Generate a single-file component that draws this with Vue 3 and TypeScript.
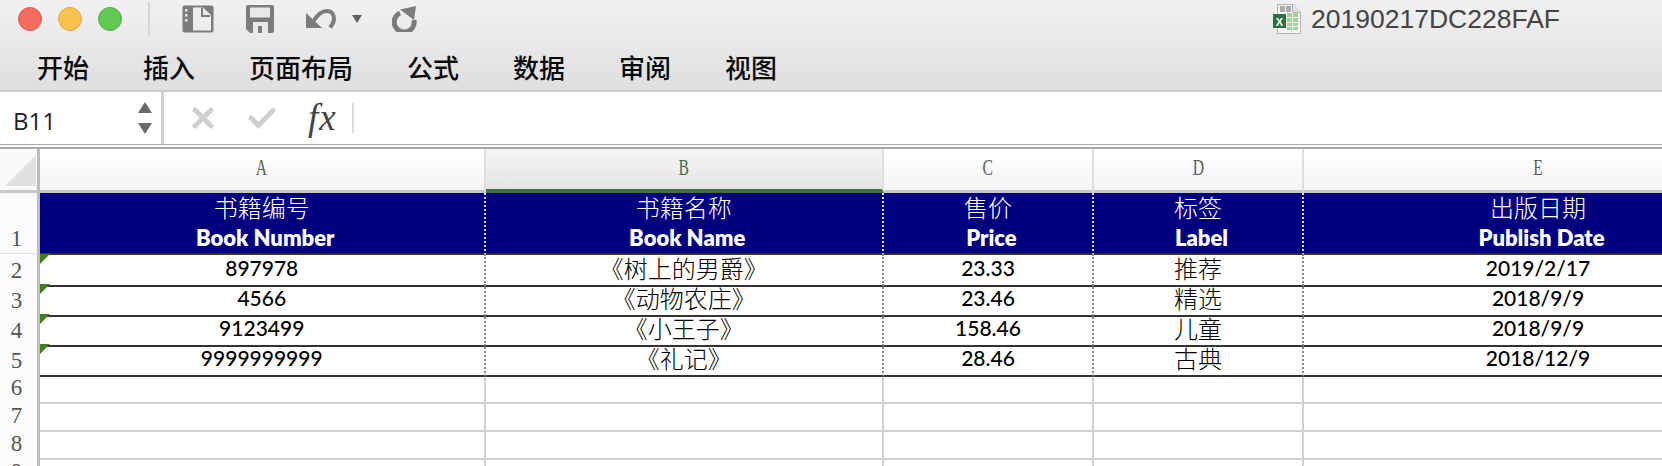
<script setup lang="ts">
interface Row { num: string; price: string; name: string; label: string; date: string; id: string }
const tabs: string[] = ['开始', '插入', '页面布局', '公式', '数据', '审阅', '视图']
const rows: Row[] = [
  { id: '2', num: '897978', name: '《树上的男爵》', price: '23.33', label: '推荐', date: '2019/2/17' },
  { id: '3', num: '4566', name: '《动物农庄》', price: '23.46', label: '精选', date: '2018/9/9' },
  { id: '4', num: '9123499', name: '《小王子》', price: '158.46', label: '儿童', date: '2018/9/9' },
  { id: '5', num: '9999999999', name: '《礼记》', price: '28.46', label: '古典', date: '2018/12/9' },
]
const heads = [
  { cn: '书籍编号', en: 'Book Number' },
  { cn: '书籍名称', en: 'Book Name' },
  { cn: '售价', en: 'Price' },
  { cn: '标签', en: 'Label' },
  { cn: '出版日期', en: 'Publish Date' },
]
const letters = ['A', 'B', 'C', 'D', 'E']
const empties = ['6', '7', '8', '9']
</script>

<template>
  <div class="app">
    <div class="top">
      <div class="titlebar">
        <div class="lights">
          <span class="light red"></span>
          <span class="light yellow"></span>
          <span class="light green"></span>
        </div>
        <span class="tsep"></span>
        <svg class="i-doc" width="32" height="28" viewBox="0 0 32 28">
          <rect x="0.5" y="0.5" width="31" height="27" rx="2" fill="#7c7c7c" />
          <rect x="3" y="4" width="2.5" height="2.5" fill="#e8e8e8" />
          <rect x="3" y="9" width="2.5" height="2.5" fill="#e8e8e8" />
          <rect x="3" y="14" width="2.5" height="2.5" fill="#e8e8e8" />
          <path d="M11 2.500H21L29 10V25.500H11Z" fill="#ededed" />
          <path d="M20 3V11H28" fill="none" stroke="#7c7c7c" stroke-width="2" />
        </svg>
        <svg class="i-save" width="28" height="28" viewBox="0 0 28 28">
          <path d="M2 0H26A2 2 0 0 1 28 2V26A2 2 0 0 1 26 28H4L0 24V2A2 2 0 0 1 2 0Z" fill="#7c7c7c" />
          <rect x="4" y="2.500" width="20" height="10" fill="#e8e8e8" />
          <rect x="7" y="17" width="15" height="11" fill="#e8e8e8" />
          <rect x="12" y="21" width="4" height="7" fill="#7c7c7c" />
        </svg>
        <svg class="i-undo" width="30" height="21" viewBox="0 0 30 21">
          <path d="M0 5V20H16Z" fill="#7c7c7c" />
          <path d="M7 14C11 7 16 3 21 3C26 3 28 7 28 11C28 15 26 17 24 19.500" fill="none" stroke="#7c7c7c" stroke-width="4" />
        </svg>
        <svg class="i-drop" width="10" height="8" viewBox="0 0 10 8"><path d="M0 0H10L5 8Z" fill="#5f5f5f" /></svg>
        <svg class="i-redo" width="25" height="26" viewBox="0 0 25 26">
          <path d="M8 7A10 10 0 1 0 22 14" fill="none" stroke="#7c7c7c" stroke-width="5" />
          <path d="M8 3.500L24 0L22 14Z" fill="#7c7c7c" />
        </svg>
        <div class="doc-title">
          <svg width="28" height="30" viewBox="0 0 28 30">
            <path d="M4.500 .5H20L27.500 8V29.500H4.500Z" fill="#f7f7f7" stroke="#b5b5b5" />
            <path d="M19.500 1V8.500H27" fill="#e0e0e0" stroke="#b5b5b5" />
            <rect x="7" y="2" width="5" height="6" fill="#ababab" />
            <rect x="13" y="2" width="5" height="6" fill="#ababab" />
            <g fill="#a4cf9c">
              <rect x="14" y="9" width="5" height="4" /><rect x="20" y="9" width="5" height="4" />
              <rect x="14" y="14" width="5" height="4" /><rect x="20" y="14" width="5" height="4" />
              <rect x="14" y="19" width="5" height="3" /><rect x="20" y="19" width="5" height="3" />
              <rect x="14" y="23" width="5" height="3" /><rect x="20" y="23" width="5" height="3" />
            </g>
            <rect x="0" y="10" width="13" height="14" fill="#2c6f40" />
            <text x="6.500" y="21.500" font-size="11" font-weight="700" text-anchor="middle" fill="#fff" font-family="Liberation Sans, sans-serif">X</text>
          </svg>
          <span class="doc-name">20190217DC228FAF</span>
        </div>
      </div>
      <div class="tabs">
        <span v-for="t in tabs" :key="t" class="tab">{{ t }}</span>
      </div>
    </div>

    <div class="formula">
      <div class="namebox">
        <span class="cellname">B11</span>
        <span class="spin">
          <svg width="14" height="11" viewBox="0 0 14 11"><path d="M7 0L14 11H0Z" fill="#6a6a6a" /></svg>
          <svg width="14" height="11" viewBox="0 0 14 11"><path d="M0 0H14L7 11Z" fill="#6a6a6a" /></svg>
        </span>
      </div>
      <svg class="f-x" width="22" height="22" viewBox="0 0 22 22">
        <path d="M3 3L19 19M19 3L3 19" stroke="#cfcfcf" stroke-width="5" stroke-linecap="round" />
      </svg>
      <svg class="f-c" width="28" height="22" viewBox="0 0 28 22">
        <path d="M3 11L10.500 18.500L25 3.500" fill="none" stroke="#cfcfcf" stroke-width="5" stroke-linecap="round" />
      </svg>
      <span class="fx"><i>fx</i></span>
      <span class="fsep"></span>
    </div>

    <div class="sheet">
      <div class="grid colhead">
        <div class="corner"><svg width="32" height="32" viewBox="0 0 32 32"><path d="M31 0V31H0Z" fill="#e0e0e0" /></svg></div>
        <div v-for="l in letters" :key="l" class="colcell" :class="{ active: l === 'B' }"><span class="narrow">{{ l }}</span></div>
      </div>
      <div class="grid headrow">
        <div class="rowno">1</div>
        <div v-for="h in heads" :key="h.en" class="hcell">
          <span class="cn">{{ h.cn }}</span>
          <span class="en">{{ h.en }}</span>
        </div>
      </div>
      <div v-for="r in rows" :key="r.id" class="grid datarow">
        <div class="rowno">{{ r.id }}</div>
        <div class="dcell flagged"><span class="flag"></span><span class="lat">{{ r.num }}</span></div>
        <div class="dcell cjk">{{ r.name }}</div>
        <div class="dcell lat">{{ r.price }}</div>
        <div class="dcell cjk">{{ r.label }}</div>
        <div class="dcell lat">{{ r.date }}</div>
      </div>
      <div v-for="e in empties" :key="e" class="grid emptyrow">
        <div class="rowno">{{ e }}</div>
        <div v-for="l in letters" :key="l" class="ecell"></div>
      </div>
    </div>
  </div>
</template>

<style>
html, body { margin: 0; background: #fff; }
</style>

<style scoped>
.app {
  width: 1662px;
  height: 466px;
  overflow: hidden;
  font-family: "Liberation Sans", sans-serif;
  background: #fff;
}
.top {
  height: 90px;
  border-bottom: 2px solid #cbcbcb;
  background: linear-gradient(#f1f1f1, #dfdfdf);
}
.titlebar {
  height: 38px;
  display: flex;
  align-items: center;
}
.lights { display: flex; gap: 16px; margin-left: 18px; }
.light { width: 22px; height: 22px; border-radius: 50%; border: 1px solid; }
.red { background: #f26d60; border-color: #dd5a50; }
.yellow { background: #f9c24f; border-color: #dfa63e; }
.green { background: #60c853; border-color: #50ac46; }
.tsep { width: 2px; height: 34px; background: #d6d6d6; margin-left: 26px; }
.i-doc { margin-left: 32px; }
.i-save { margin-left: 32px; }
.i-undo { margin-left: 32px; margin-top: -1px; }
.i-drop { margin-left: 16px; }
.i-redo { margin-left: 30px; }
.doc-title { margin-left: auto; margin-right: 102px; display: flex; align-items: center; gap: 10px; }
.doc-name { font-size: 26.5px; color: #444; }
.tabs {
  display: flex;
  padding-left: 37px;
  gap: 54px;
  margin-top: 11px;
}
.tab {
  font-family: "Noto Sans CJK SC", sans-serif;
  font-size: 26px;
  line-height: 36px;
  font-weight: 500;
  color: #0a0a0a;
}
.formula {
  height: 52px;
  display: flex;
  align-items: center;
  border-bottom: 1px solid #a9a9a9;
}
.namebox {
  width: 164px;
  height: 52px;
  flex: none;
  box-sizing: border-box;
  border-right: 3px solid #cfcfcf;
  display: flex;
  align-items: center;
  justify-content: space-between;
  padding: 0 9px 0 13px;
}
.cellname { font-family: "Open Sans", sans-serif; font-size: 24px; color: #222; padding-top: 5px; }
.spin { display: flex; flex-direction: column; gap: 10px; }
.spin svg { display: block; }
.f-x { margin-left: 28px; }
.f-c { margin-left: 34px; }
.fx {
  margin-left: 32px;
  width: 30px;
  font-family: "Liberation Serif", serif;
  font-size: 37px;
  letter-spacing: 1px;
  color: #444;
  line-height: 40px;
}
.fsep { width: 2px; height: 30px; background: #ddd; margin-left: 14px; }
.sheet {
  border-top: 2px solid #fff;
  box-shadow: inset 0 2px 0 #a9a9a9;
  padding-top: 2px;
}
.grid {
  display: grid;
  grid-template-columns: 40px 445.5px 398.500px 210px 210px 470px;
}
.colhead { height: 44px; }
.corner {
  box-sizing: border-box;
  border-right: 3px solid #bcbcbc;
  border-bottom: 3px solid #c8c8c8;
  background: #fafafa;
  display: flex;
  align-items: flex-end;
  justify-content: flex-end;
  padding-bottom: 3px;
  overflow: hidden;
}
.colcell {
  box-sizing: border-box;
  border-right: 2px solid #dedede;
  border-bottom: 3px solid #c8c8c8;
  background: linear-gradient(#fff, #f5f5f5);
  text-align: center;
  font-family: "Liberation Serif", serif;
  font-size: 23px;
  line-height: 38px;
  color: #5a5a5a;
}
.narrow { display: inline-block; transform: scaleX(0.68); }
.colcell.active {
  background: linear-gradient(#f6f6f6, #e4e4e4);
  border-bottom: 4px solid #3c7249;
  color: #3c7249;
}
.headrow { height: 61px; }
.rowno {
  box-sizing: border-box;
  border-right: 3px solid #bcbcbc;
  border-bottom: 2px solid #e2e2e2;
  background: #fbfbfb;
  font-family: "Liberation Serif", serif;
  font-size: 23px;
  line-height: 28px;
  color: #555;
  display: flex;
  align-items: flex-end;
  justify-content: center;
  padding-right: 4px;
}
.hcell {
  box-sizing: border-box;
  background: #00007f;
  color: #fff;
  border-right: 2px dotted #e0e0e0;
  border-bottom: 2px solid #333;
  text-align: center;
  display: flex;
  flex-direction: column;
  align-items: center;
}
.cn {
  font-family: "Noto Sans CJK SC", sans-serif;
  font-weight: 300;
  font-size: 24px;
  line-height: 28px;
}
.en {
  font-family: Lato, sans-serif;
  font-weight: 800;
  font-size: 22px;
  line-height: 30px;
  margin-top: 2px;
  margin-left: 7px;
}
.datarow { height: 30px; }
.dcell {
  box-sizing: border-box;
  position: relative;
  border-right: 2px dotted #8a8a8a;
  border-bottom: 2px solid #333;
  text-align: center;
  line-height: 28px;
  color: #000;
}
.lat { font-family: Lato, sans-serif; font-weight: 500; font-size: 21px; }
.cjk { font-family: "Noto Sans CJK SC", sans-serif; font-weight: 300; font-size: 24px; }
.flag {
  position: absolute;
  left: 0;
  top: 0;
  width: 0;
  height: 0;
  border-top: 10px solid #3f7d20;
  border-right: 10px solid transparent;
}
.emptyrow { height: 28px; }
.ecell {
  box-sizing: border-box;
  border-right: 2px solid #cfcfcf;
  border-bottom: 2px solid #cfcfcf;
}
</style>
